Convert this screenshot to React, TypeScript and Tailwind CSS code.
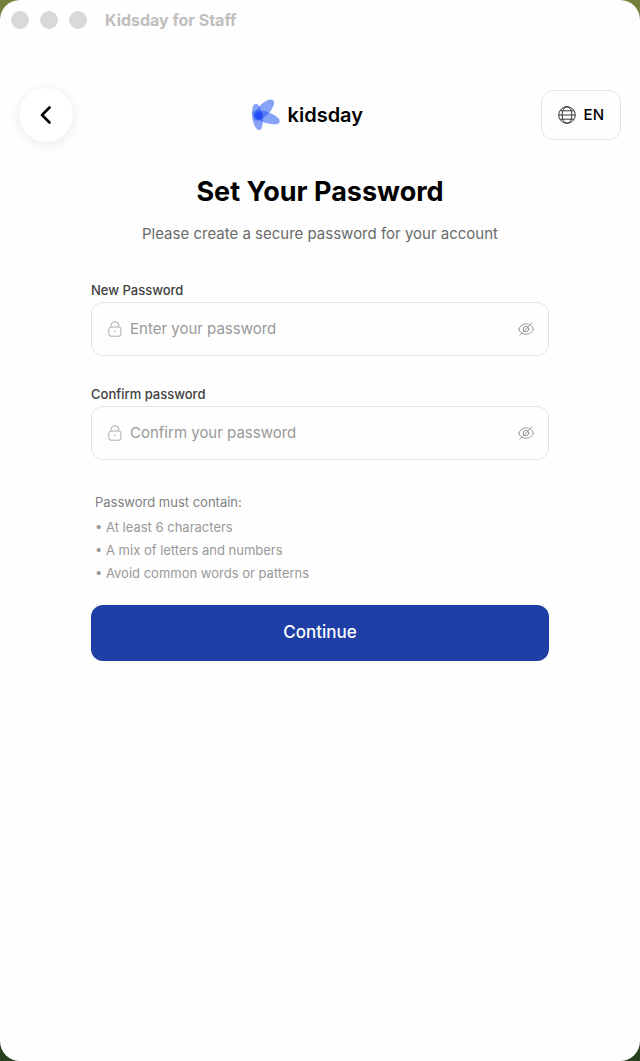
import React, { useState } from 'react';

const rules = [
  'At least 6 characters',
  'A mix of letters and numbers',
  'Avoid common words or patterns',
];

function Logo() {
  return (
    <div className="flex items-center gap-2">
      <svg className="h-8 w-[29px]" viewBox="0 0 29 32" fill="#2558f0" aria-hidden="true">
        <ellipse cx="12.8" cy="11" rx="5.8" ry="13.6" transform="rotate(44 12.8 11)" fillOpacity="0.55" />
        <ellipse cx="15" cy="18.3" rx="14.4" ry="5.6" transform="rotate(19 15 18.3)" fillOpacity="0.55" />
        <ellipse cx="6.4" cy="18" rx="5.2" ry="13.3" transform="rotate(-8 6.4 18)" fillOpacity="0.55" />
        <circle cx="8" cy="16.8" r="4" fill="#1238f5" fillOpacity="0.6" />
      </svg>
      <span className="text-xl leading-8 font-semibold text-black">kidsday</span>
    </div>
  );
}

function GlobeIcon() {
  return (
    <svg className="size-[18px]" viewBox="0 0 18 18" fill="none" stroke="#222" strokeWidth="0.9" aria-hidden="true">
      <circle cx="9" cy="9" r="8.3" />
      <ellipse cx="9" cy="9" rx="4.9" ry="8.3" />
      <path d="M2.2 4.8h13.6M2.2 13.2h13.6M.7 9h16.6" />
    </svg>
  );
}

function LockIcon() {
  return (
    <svg className="h-4 w-[14px] shrink-0" viewBox="0 0 14 16" fill="none" stroke="#aaa" aria-hidden="true">
      <rect x="0.8" y="6" width="12.2" height="9.2" rx="2.2" />
      <path d="M3.1 6V4.4a3.8 3.8 0 0 1 7.6 0V6" />
      <circle cx="7" cy="10.5" r="0.8" fill="#aaa" stroke="none" />
    </svg>
  );
}

function EyeOffIcon() {
  return (
    <svg className="h-[14px] w-4" viewBox="0 0 16 14" fill="none" stroke="#999" strokeLinecap="round" aria-hidden="true">
      <path d="M.8 7C2.2 3.6 5 1.900 8 1.900S15.200 3.600 15.200 7C15.200 10.400 11 12.100 8 12.100S.8 10.400.8 7Z" />
      <circle cx="8" cy="7" r="2.7" />
      <path d="M14 .8 2 13.2" />
    </svg>
  );
}

type PasswordFieldProps = {
  id: string;
  label: string;
  placeholder: string;
};

function PasswordField({ id, label, placeholder }: PasswordFieldProps) {
  const [visible, setVisible] = useState(false);

  return (
    <div>
      <label htmlFor={id} className="block text-[13px] leading-6 font-medium text-[#404040]">
        {label}
      </label>
      <div className="flex h-[54px] items-center gap-2 rounded-xl border border-[#e2e2e2] pr-3.5 pl-4">
        <LockIcon />
        <input
          id={id}
          type={visible ? 'text' : 'password'}
          placeholder={placeholder}
          className="min-w-0 flex-1 text-[15px] text-black outline-none placeholder:text-[#999]"
        />
        <button
          type="button"
          aria-label="Toggle password visibility"
          aria-pressed={visible}
          onClick={() => setVisible(!visible)}
        >
          <EyeOffIcon />
        </button>
      </div>
    </div>
  );
}

export default function App() {
  return (
    <div className="min-h-screen bg-linear-to-b from-[#75803a] to-[#26401d] font-['Inter',sans-serif]">
      <div className="min-h-screen rounded-[20px] bg-[#fefefe]">
        <div className="flex h-10 items-center px-[11px]">
          <div className="flex gap-[11px]">
            <span className="size-[18px] rounded-full bg-[#d9d9d9]" />
            <span className="size-[18px] rounded-full bg-[#d9d9d9]" />
            <span className="size-[18px] rounded-full bg-[#d9d9d9]" />
          </div>
          <span className="ml-[18px] text-base font-bold text-[#bfbfbf]">Kidsday for Staff</span>
        </div>

        <header className="mt-12 flex items-center justify-between px-[19px]">
          <button
            type="button"
            aria-label="Back"
            className="flex size-[54px] items-center justify-center rounded-full bg-white shadow-[0_2px_12px_rgba(0,0,0,0.09)]"
          >
            <svg className="h-[18px] w-3" viewBox="0 0 12 18" fill="none" stroke="#000" strokeWidth="2.6" strokeLinecap="round" strokeLinejoin="round" aria-hidden="true">
              <path d="M9.5 1.5 2 9l7.5 7.5" />
            </svg>
          </button>
          <Logo />
          <button
            type="button"
            className="flex h-[50px] items-center gap-2 rounded-xl border border-[#e4e4e4] px-4 text-[15px] font-medium text-black"
          >
            <GlobeIcon />
            EN
          </button>
        </header>

        <main className="px-[91px] pt-8">
          <h1 className="text-center text-[27px] leading-9 font-bold text-black">Set Your Password</h1>
          <p className="mt-3 text-center text-[15px] leading-6 text-[#6a6a6a]">
            Please create a secure password for your account
          </p>

          <form className="mt-8" onSubmit={(e) => e.preventDefault()}>
            <div className="flex flex-col gap-[26px]">
              <PasswordField id="new-password" label="New Password" placeholder="Enter your password" />
              <PasswordField id="confirm-password" label="Confirm password" placeholder="Confirm your password" />
            </div>

            <div className="mt-[30px] px-1 text-[13px]">
              <p className="leading-6 text-[#808080]">Password must contain:</p>
              <ul className="mt-0.5 leading-[23px] text-[#999]">
                {rules.map((rule) => (
                  <li key={rule}>• {rule}</li>
                ))}
              </ul>
            </div>

            <button
              type="submit"
              className="mt-5 h-14 w-full rounded-xl bg-[#1e40a6] text-[17px] font-medium text-white"
            >
              Continue
            </button>
          </form>
        </main>
      </div>
    </div>
  );
}
